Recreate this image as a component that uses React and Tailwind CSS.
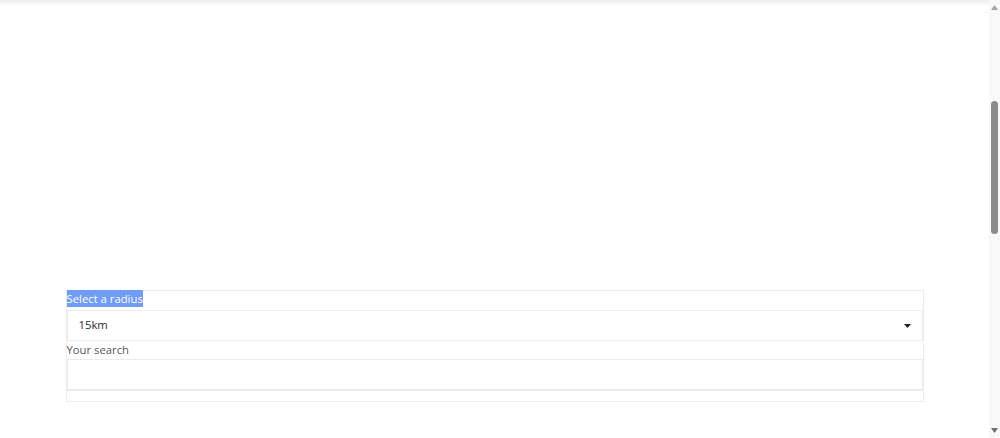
export default function App() {
  return (
    <div className="flex h-[438px] w-[1000px] overflow-hidden bg-white font-['Open_Sans',sans-serif]">
      {/* page */}
      <div className="flex flex-1 flex-col">
        <div className="h-[6px] bg-gradient-to-b from-[#ededed] to-white" />
        <div className="pt-[284px]">
          <form className="mx-auto w-[858px] border border-[#ececec]">
            <label className="block pb-[4px] text-[11.3px] leading-[15px]">
              <span className="bg-[#6f9cf6] py-[1px] text-white">Select a radius</span>
            </label>
            <div className="flex h-[31px] items-center justify-between border border-[#ececec] pl-[11px] pr-[11px] text-[11.3px] text-[#2a2a2a]">
              <span>15km</span>
              <svg width="7" height="4" viewBox="0 0 7 4" className="fill-[#222]">
                <path d="M0 0h7L3.5 4z" />
              </svg>
            </div>
            <div className="text-[11.3px] leading-[18px] text-[#555]">Your search</div>
            <div className="h-[32px] border border-b-2 border-[#ececec]" />
            <div className="h-[10px]" />
          </form>
        </div>
      </div>
      {/* scrollbar */}
      <div className="flex w-[11px] flex-col items-center bg-[#f9f9f9]">
        <div className="flex h-[15px] items-center justify-center">
          <svg width="7" height="5" viewBox="0 0 7 5" className="fill-[#a3a3a3]">
            <path d="M3.5 0L7 5H0z" />
          </svg>
        </div>
        <div className="flex flex-1 flex-col items-center pt-[86px]">
          <div className="h-[133px] w-[7px] rounded-full bg-[#8c8c8c]" />
        </div>
        <div className="flex h-[15px] items-center justify-center">
          <svg width="7" height="5" viewBox="0 0 7 5" className="fill-[#6f6f6f]">
            <path d="M0 0h7L3.5 5z" />
          </svg>
        </div>
      </div>
    </div>
  );
}
